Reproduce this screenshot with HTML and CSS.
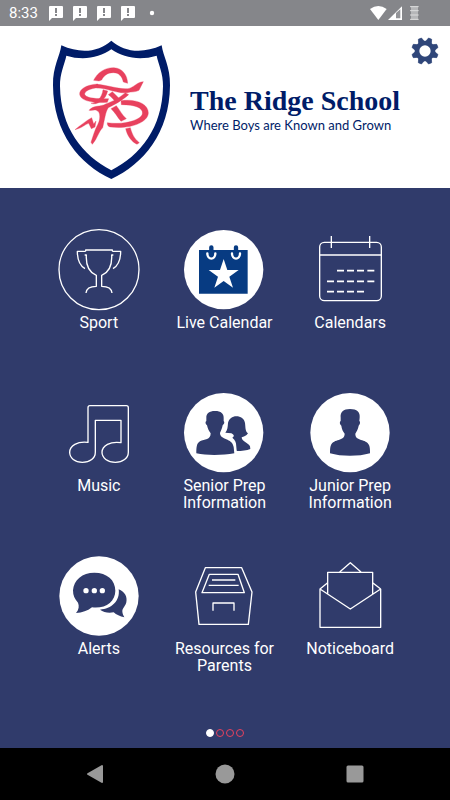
FILE: index.html
```html
<!DOCTYPE html>
<html lang="en">
<head>
<meta charset="utf-8">
<meta name="viewport" content="width=device-width, initial-scale=1">
<title>The Ridge School</title>
<link rel="stylesheet" href="styles.css">
</head>
<body>
<div class="status">
  <span class="clock">8:33</span>
  <div class="notices">
    <svg viewBox="0 0 16 16"><path fill="#fff" d="M2 1h12q1 0 1 1v10q0 1-1 1H4l-3 3V2q0-1 1-1z"/><path stroke="#85868a" stroke-width="2" d="M8 3v5M8 9v2"/></svg>
    <svg viewBox="0 0 16 16"><path fill="#fff" d="M2 1h12q1 0 1 1v10q0 1-1 1H4l-3 3V2q0-1 1-1z"/><path stroke="#85868a" stroke-width="2" d="M8 3v5M8 9v2"/></svg>
    <svg viewBox="0 0 16 16"><path fill="#fff" d="M2 1h12q1 0 1 1v10q0 1-1 1H4l-3 3V2q0-1 1-1z"/><path stroke="#85868a" stroke-width="2" d="M8 3v5M8 9v2"/></svg>
    <svg viewBox="0 0 16 16"><path fill="#fff" d="M2 1h12q1 0 1 1v10q0 1-1 1H4l-3 3V2q0-1 1-1z"/><path stroke="#85868a" stroke-width="2" d="M8 3v5M8 9v2"/></svg>
    <svg viewBox="0 0 16 16"><circle cx="8" cy="8" r="2.2" fill="#fff"/></svg>
  </div>
  <svg class="signals" viewBox="60 12 156 54">
    <path fill="#fff" d="M63 27q25-18 50 0L88 60z"/>
    <path fill="#fff" d="M159 19v41h-42z"/><path fill="#939498" d="M141 39l13-11v27h-13z"/>
    <path fill="#b5b6b8" d="M186 18h21v42h-21z"/><path stroke="#dcdcdd" stroke-width="3" d="M183 20h26M183 32h26M183 45h26M183 58h26"/>
  </svg>
</div>
<header class="header">
  <svg class="crest" viewBox="0 0 405 465" role="img" aria-label="School crest">
    <path fill="#001c68" d="M199 32C236 65 291 73 350 46C354 78 376 110 375 166C374 310 295 403 199 447C103 403 25 310 24 166C23 110 45 78 49 46C108 73 162 65 199 32z"/>
    <path fill="#fff" d="M199 58C235 84 286 92 335 77C340 103 355 130 354 169C352 294 287 376 199 421C112 376 47 294 45 169C44 130 59 103 64 77C113 92 163 84 199 58z"/>
    <g fill="#e8415e" stroke="#e8415e" stroke-width="1" stroke-linejoin="round">
      <path d="M146 151C157 127 181 112 207 113C233 115 247 135 248 160L235 156C231 138 221 128 205 128C186 128 176 138 170 150L162 153z"/>
      <path d="M153 163C190 165 218 178 249 176C266 173 276 156 295 155L282 181C272 187 259 185 247 188C216 192 186 173 155 174z"/>
      <path d="M159 162C121 164 103 179 104 193C107 213 144 220 187 217L191 206C150 207 122 204 119 193C118 183 137 175 160 173z"/>
      <path d="M174 179L188 183C181 214 153 226 138 220C155 217 171 204 174 179z"/>
      <path d="M241 188L251 194C226 215 210 223 190 233C181 246 179 269 173 293C161 304 158 324 142 343L138 337C144 319 149 300 159 282C167 267 165 248 159 244C151 236 142 243 132 241C143 225 168 231 182 222C206 213 221 205 241 188z"/>
      <path d="M202 185C213 195 222 204 226 211L213 218C207 208 199 201 190 194z"/>
      <path d="M214 227C224 239 231 255 244 266L228 274C217 261 210 247 198 236z"/>
      <path d="M228 212C275 206 310 222 310 249C309 278 254 298 197 291C190 290 186 286 187 278C239 286 288 269 292 252C296 233 268 224 229 224z"/>
      <path d="M242 296L256 293C261 311 267 325 283 338L276 343C260 334 248 321 242 296z"/>
      <path d="M90 299C105 287 124 272 140 263L146 282L153 273L150 291L139 296L131 280C120 283 108 296 90 299z"/>
    </g>
  </svg>
  <div class="brand">
    <h1 class="name">The Ridge School</h1>
    <p class="tagline">Where Boys are Known and Grown</p>
  </div>
  <button class="settings" type="button" aria-label="Settings">
    <svg viewBox="-42 -42 84 84">
      <circle r="24" fill="none" stroke="#2f4679" stroke-width="14"/>
      <g fill="#2f4679" stroke="#2f4679" stroke-width="2" stroke-linejoin="round"><path d="M-9-28L-5-40H5L9-28z" transform="rotate(22.5)"/><path d="M-9-28L-5-40H5L9-28z" transform="rotate(67.5)"/><path d="M-9-28L-5-40H5L9-28z" transform="rotate(112.5)"/><path d="M-9-28L-5-40H5L9-28z" transform="rotate(157.5)"/><path d="M-9-28L-5-40H5L9-28z" transform="rotate(202.5)"/><path d="M-9-28L-5-40H5L9-28z" transform="rotate(247.5)"/><path d="M-9-28L-5-40H5L9-28z" transform="rotate(292.5)"/><path d="M-9-28L-5-40H5L9-28z" transform="rotate(337.5)"/></g>
    </svg>
  </button>
</header>
<main class="home">
  <nav class="grid" aria-label="Sections">
    <a class="tile" href="#sport">
      <svg class="icon line" viewBox="27 30 240 240"><circle cx="147" cy="149" r="120"/><path d="M107 94V90H187V94M107 94H82C82 119 88 136 105 146M187 94H212C212 119 206 136 189 146M104 105H109C107 140 117 157 139 166V199C120 199 109 206 108 219M190 105H185C187 140 177 157 155 166V199C174 199 185 206 186 219"/></svg>
      <span>Sport</span>
    </a>
    <a class="tile" href="#live-calendar">
      <svg class="icon" viewBox="45 30 240 240"><circle cx="164" cy="149" r="119" fill="#fff"/><path fill="#073b82" d="M90 90h146v131H90z"/><path fill="#fff" d="M164 117L175 150H209L181 170L192 203L164 183L136 203L147 170L119 150H153z"/><g fill="none" stroke-linecap="round"><path stroke="#fff" stroke-width="7" d="M115 100C115 121 139 121 139 100M189 100C189 121 213 121 213 100"/><path stroke="#073b82" stroke-width="13" d="M127 82V103M201 82V103"/></g></svg>
      <span>Live Calendar</span>
    </a>
    <a class="tile" href="#calendars">
      <svg class="icon line" viewBox="30 30 240 240"><rect x="59" y="67" width="185" height="175" rx="14"/><path d="M59 105H244M94 48V84M209 48V84"/><path stroke-width="5" d="M111 152H132M141 152H162M171 152H192M202 152H223M81 184H102M111 184H132M141 184H162M171 184H192M202 184H223M81 215H102M111 215H132M141 215H162M171 215H192"/></svg>
      <span>Calendars</span>
    </a>
    <a class="tile" href="#music">
      <svg class="icon line" viewBox="27 24 240 240"><path d="M114 172V68Q114 62 120 62H229Q235 62 235 68V202C235 220 218 232 196 232C173 232 156 219 156 202C156 182 181 168 213 173V106H136V202C136 220 120 232 97 232C75 232 59 219 59 202C59 182 82 168 114 172z"/></svg>
      <span>Music</span>
    </a>
    <a class="tile" href="#senior-prep">
      <svg class="icon" viewBox="45 24 240 240"><circle cx="164" cy="143" r="119" fill="#fff"/><g fill="#303b6b"><path d="M190 158C198 154 194 148 187 145L169 143C176 135 176 125 177 114C180 101 190 94 202 94C215 94 226 101 228 114C230 128 228 138 237 145C232 153 224 155 218 157C218 169 238 174 243 184L244 192C233 197 219 198 202 198C199 186 199 169 190 164z"/><path d="M112 99C111 85 121 78 138 78C156 78 165 86 164 100V108C168 111 165 118 161 121C159 132 155 138 153 144C153 166 190 158 194 186L196 205C162 211 114 212 82 205C82 190 82 175 93 169C107 163 125 165 125 145C120 138 116 131 114 121C109 117 108 110 112 108z"/></g><path fill="none" stroke="#fff" stroke-width="6" d="M168 147C175 160 195 155 198 176L201 207"/></svg>
      <span>Senior Prep Information</span>
    </a>
    <a class="tile" href="#junior-prep">
      <svg class="icon" viewBox="420 24 240 240"><circle cx="540" cy="143" r="119" fill="#fff"/><path fill="#303b6b" d="M512 98C510 82 520 72 540 72C561 72 571 82 569 98L568 108C572 110 570 119 566 122C564 133 560 139 556 146C555 170 589 160 597 180C600 187 600 195 600 205C566 215 514 215 480 205C480 195 480 187 483 180C491 160 524 170 524 146C519 139 515 132 514 122C509 119 508 110 512 108z"/></svg>
      <span>Junior Prep Information</span>
    </a>
    <a class="tile" href="#alerts">
      <svg class="icon" viewBox="27 18 240 240"><circle cx="147" cy="138" r="119" fill="#fff"/><path fill="#303b6b" d="M133 68C171 68 196 90 196 122C196 155 166 177 126 172C112 183 97 188 78 189C87 178 88 168 84 158C74 147 69 137 69 121C71 90 97 68 133 68z"/><path fill="#303b6b" d="M206 118C224 125 233 140 229 157C227 168 217 174 217 184C217 192 221 197 223 202C210 200 199 194 191 187C175 190 161 187 150 179C184 177 211 153 206 118z"/><g fill="#fff"><circle cx="108" cy="122" r="8"/><circle cx="133" cy="122" r="8"/><circle cx="157" cy="122" r="8"/></g></svg>
      <span>Alerts</span>
    </a>
    <a class="tile" href="#resources">
      <svg class="icon line" viewBox="45 18 240 240"><path d="M109 53H218L249 126L238 223H90L80 126zM121 73H207L226 128H99zM129 90H199M119 106H209M132 182V159H195V182"/></svg>
      <span>Resources for Parents</span>
    </a>
    <a class="tile" href="#noticeboard">
      <svg class="icon line" viewBox="420 18 240 240"><path d="M450 117L541 177L632 117V232H450zM450 117L473 98M632 117L608 98M473 132V67H608V132M509 66L541 38L573 66"/></svg>
      <span>Noticeboard</span>
    </a>
  </nav>
  <div class="pages"><i class="dot current"></i><i class="dot"></i><i class="dot"></i><i class="dot"></i></div>
</main>
<footer class="system">
  <button type="button" aria-label="Back"><svg viewBox="0 0 20 20"><path fill="#999" stroke="#999" stroke-width="2" stroke-linejoin="round" d="M3 10L17 2V18z"/></svg></button>
  <button type="button" aria-label="Home"><svg viewBox="0 0 20 20"><circle cx="10" cy="10" r="9.5" fill="#999"/></svg></button>
  <button type="button" aria-label="Recent apps"><svg viewBox="0 0 20 20"><rect x="1.5" y="1.5" width="17" height="17" rx="1.5" fill="#999"/></svg></button>
</footer>
</body>
</html>
```
FILE: styles.css
```css
* { box-sizing: border-box; }
body {
  margin: 0;
  min-height: 100vh;
  display: flex;
  flex-direction: column;
  font-family: Roboto, "Liberation Sans", sans-serif;
  background: #303b6b;
}
svg { display: block; }
button { border: 0; padding: 0; background: none; cursor: pointer; }

.status {
  display: flex;
  align-items: center;
  height: 26px;
  padding: 0 29px 0 9px;
  background: #85868a;
  color: #fff;
}
.clock { font-size: 15px; line-height: 26px; }
.notices { display: flex; gap: 8px; margin-left: 10px; }
.notices svg { width: 16px; height: 16px; }
.signals { width: 52px; height: 18px; margin-left: auto; }

.header {
  display: flex;
  align-items: center;
  padding: 4px 11px 3px 45px;
  background: #fff;
  color: #001c68;
}
.crest { width: 135px; height: 155px; flex: none; }
.brand { margin: 6px 0 0 10px; white-space: nowrap; }
.name {
  margin: 0;
  font: bold 28px/28px "Liberation Serif", serif;
}
.tagline { margin: 0; font: 13px/20px Lato, sans-serif; }
.settings { align-self: flex-start; margin: 7px 0 0 auto; }
.settings svg { width: 28px; height: 28px; }

.home {
  flex: 1;
  display: flex;
  flex-direction: column;
  padding: 42px 37px 11px 36px;
}
.grid {
  display: grid;
  grid-template-columns: repeat(3, 1fr);
  grid-auto-rows: 163px;
}
.tile {
  display: flex;
  flex-direction: column;
  align-items: center;
  gap: 4px;
  padding: 0 8px;
  color: #fff;
  font-size: 16px;
  line-height: 17px;
  text-align: center;
  text-decoration: none;
}
.icon { width: 80px; height: 80px; flex: none; overflow: visible; }
.line { fill: none; stroke: #fff; stroke-width: 4; stroke-linejoin: round; }

.pages {
  display: flex;
  justify-content: center;
  gap: 2px;
  margin-top: auto;
}
.dot { width: 8px; height: 8px; border: 1px solid #e8415e; border-radius: 50%; }
.current { background: #fff; border-color: #fff; }

.system {
  display: flex;
  justify-content: space-between;
  align-items: center;
  height: 52px;
  padding: 0 85px;
  background: #000;
}
.system svg { width: 20px; height: 20px; }
```
